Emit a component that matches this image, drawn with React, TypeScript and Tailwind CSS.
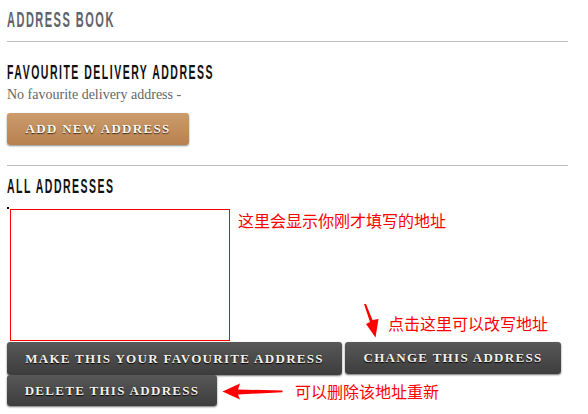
import React from "react";

const headFont = { fontFamily: '"Liberation Sans", Arial, sans-serif' };

const Heading = ({ text, className }: { text: string; className: string }) => (
  <div className={`h-[21px] leading-none font-bold text-[21px] whitespace-nowrap ${className}`} style={headFont}>
    <span className="inline-block origin-left scale-x-50 tracking-[3px]">{text}</span>
  </div>
);

const DarkButton = ({ label, className }: { label: string; className: string }) => (
  <button
    className={`flex items-center justify-center rounded-[3px] bg-linear-to-b from-[#585858] to-[#3d3d3d] font-['Liberation_Serif',serif] text-[13px] font-bold tracking-[0.1em] text-[#f4f1ea] shadow-[0_1px_2px_rgba(0,0,0,0.55)] [text-shadow:0_1px_1px_#000] ${className}`}
  >
    {label}
  </button>
);

export default function App() {
  return (
    <div className="w-[588px] bg-white pl-[7px] pr-[20px] pt-[9px] font-['Liberation_Sans',sans-serif]">
      <Heading text="ADDRESS BOOK" className="h-[22px] text-[22px] text-[#5f636b]" />
      <div className="mt-[10px] h-px bg-[#bdbdbd]" />

      <Heading text="FAVOURITE DELIVERY ADDRESS" className="mt-[19px] text-[#111]" />
      <p className="mt-[3px] font-['Liberation_Serif',serif] text-[14px] leading-[20px] text-[#666]">
        No favourite delivery address -
      </p>
      <button className="mt-[8px] flex h-[32px] w-[182px] items-center justify-center rounded-[3px] bg-linear-to-b from-[#cc9c6c] to-[#b7814f] font-['Liberation_Serif',serif] text-[13px] font-bold tracking-[0.1em] text-[#fbf8f2] shadow-[0_1px_2px_rgba(0,0,0,0.45)] [text-shadow:0_1px_1px_#3a2410]">
        ADD NEW ADDRESS
      </button>
      <div className="mt-[20px] h-px bg-[#bdbdbd]" />

      <Heading text="ALL ADDRESSES" className="mt-[9px] text-[#111]" />

      <div className="mt-[13px] flex items-start">
        <div className="-mt-[2px] h-[2px] w-[2px] bg-black" />
        <div className="ml-[1px] h-[132px] w-[220px] border border-[#f00] bg-white" />
        <div className="ml-[8px] flex h-[132px] flex-1 flex-col justify-between font-['Noto_Sans_CJK_SC',sans-serif] text-[16px] leading-none text-[#f00]">
          <div className="mt-[3px]">这里会显示你刚才填写的地址</div>
          <div className="mb-[3px] ml-[125px] flex items-start">
            <svg width="18" height="34" viewBox="0 0 18 34">
              <polygon points="1,0 3,0 9.5,16 15.5,15 12.5,33.5 3,20 7,18" fill="#f00" />
            </svg>
            <span className="ml-[7px] mt-[11px]">点击这里可以改写地址</span>
          </div>
        </div>
      </div>

      <div className="mt-px flex gap-[3px]">
        <DarkButton label="MAKE THIS YOUR FAVOURITE ADDRESS" className="h-[33px] w-[335px]" />
        <DarkButton label="CHANGE THIS ADDRESS" className="h-[32px] w-[216px]" />
      </div>
      <div className="flex items-start">
        <DarkButton label="DELETE THIS ADDRESS" className="h-[31px] w-[210px]" />
        <svg className="ml-[5px] mt-[8px]" width="61" height="17" viewBox="0 0 61 17">
          <polygon points="0.5,8.5 18,0.5 16,6.5 60.5,7.5 60.5,9.3 16,11.5 18,16.5" fill="#f00" />
        </svg>
        <span className="ml-[12px] mt-[8px] font-['Noto_Sans_CJK_SC',sans-serif] text-[16px] leading-none text-[#f00]">
          可以删除该地址重新
        </span>
      </div>
      <div className="h-[8px]" />
    </div>
  );
}
